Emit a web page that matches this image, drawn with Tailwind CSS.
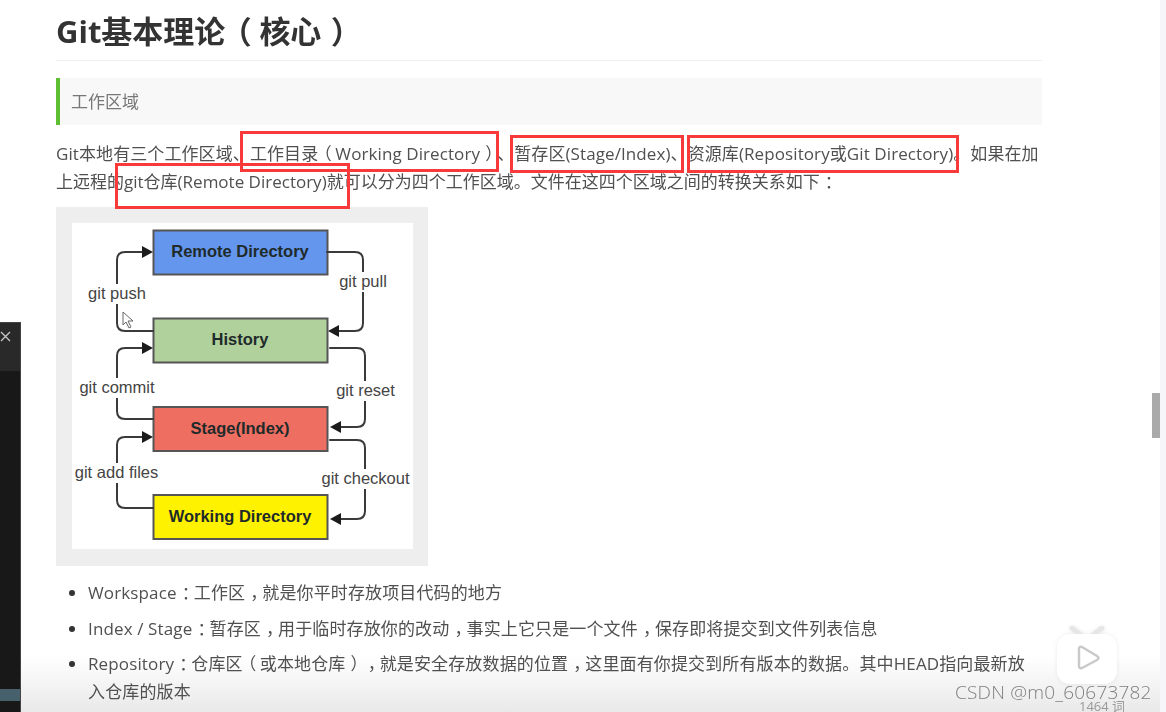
<!DOCTYPE html>
<html lang="zh-CN">
<head>
<meta charset="utf-8">
<title>Git基本理论</title>
<script src="https://cdn.jsdelivr.net/npm/@tailwindcss/browser@4"></script>
</head>
<body class="relative h-[712px] w-[1166px] overflow-hidden bg-white font-['Open_Sans','Noto_Sans_CJK_SC',sans-serif] text-[17px] leading-[28px] text-[#505050] [text-spacing-trim:space-all]">
  <div class="pointer-events-none absolute inset-x-0 bottom-0 h-[56px] bg-gradient-to-b from-white/0 to-[#e9e9e9]"></div>

  <main class="relative ml-[56px] w-[986px] blur-[0.4px]">
    <h1 class="h-[61px] border-b border-[#eeeeee] pt-[10px] text-[31px] leading-[42px] font-bold text-[#333333]">Git基本理论<span class="mr-[3px] inline-block -translate-x-[0.15em]">（</span>核心<span class="inline-block translate-x-[0.3em]">）</span></h1>
    <blockquote class="mt-[17px] flex h-[47px] items-center border-l-[4px] border-[#5fbf32] bg-[#f8f8f8] pt-[1px] pl-[11px] text-[#777777]">工作区域</blockquote>
    <p class="mt-[15px]"><span class="tracking-[0.09px]">Git本地有三个工作区域、工作目录<span class="inline-block -translate-x-[0.2em]">（</span>Working Directory<span class="inline-block translate-x-[0.3em]">）</span>、暂存区(Stage/Index)、资源库(Repository或Git Directory)。如果在加</span>上远程的git仓库(Remote Directory)就可以分为四个工作区域。文件在这四个区域之间的转换关系如下<span class="inline-block translate-x-[0.3em]">：</span></p>
    <div class="mt-[11px] h-[359px] w-[372px] bg-[#eeeeee] p-[16px]">
      <svg width="341" height="326" viewBox="72 223 341 326" fill="none" font-family="'Liberation Sans',sans-serif">
        <rect x="72" y="223" width="341" height="326" fill="#ffffff"/>
        <g stroke="#555555" stroke-width="2">
          <rect x="153.500" y="230.500" width="174" height="44" fill="#6496ee"/>
          <rect x="153.500" y="318.500" width="174" height="44" fill="#b0d09c"/>
          <rect x="153.500" y="407" width="174" height="44" fill="#ee6f62"/>
          <rect x="153.500" y="495" width="174" height="44" fill="#fff200"/>
        </g>
        <g stroke="#3a3a3a" stroke-width="2" stroke-linecap="round">
          <path d="M153 331H125Q117 331 117 323V260Q117 252 125 252H145"/>
          <path d="M327 252H355Q363 252 363 260V323Q363 331 355 331H338"/>
          <path d="M330 348H357Q365 348 365 356V419Q365 427 357 427H341"/>
          <path d="M153 419H125Q117 419 117 411V356Q117 348 125 348H145"/>
          <path d="M153 508H125Q117 508 117 500V445Q117 437 125 437H145"/>
          <path d="M330 440H357Q365 440 365 448V511Q365 519 357 519H341"/>
        </g>
        <g fill="#1c1c1c">
          <path d="M153 252L142 246V258Z"/>
          <path d="M328 331L339 325V337Z"/>
          <path d="M330 427L341 421V433Z"/>
          <path d="M153 348L142 342V354Z"/>
          <path d="M153 437L142 431V443Z"/>
          <path d="M330 519L341 513V525Z"/>
        </g>
        <g fill="#ffffff">
          <rect x="86" y="284" width="62" height="20"/>
          <rect x="337" y="272" width="52" height="20"/>
          <rect x="77" y="378" width="80" height="20"/>
          <rect x="334" y="381" width="63" height="20"/>
          <rect x="73" y="463" width="87" height="20"/>
          <rect x="319" y="469" width="93" height="20"/>
        </g>
        <g fill="#1f2a2a" font-size="16.500" font-weight="700" text-anchor="middle">
          <text x="240" y="257">Remote Directory</text>
          <text x="240" y="345">History</text>
          <text x="240" y="434">Stage(Index)</text>
          <text x="240" y="522">Working Directory</text>
        </g>
        <g fill="#444444" font-size="16.500" text-anchor="middle">
          <text x="117" y="299">git push</text>
          <text x="363" y="287">git pull</text>
          <text x="117" y="393">git commit</text>
          <text x="365.500" y="396">git reset</text>
          <text x="116.500" y="478">git add files</text>
          <text x="365.500" y="484">git checkout</text>
        </g>
        <path d="M123 312V325L126 322L129 328L131 327L128 321L133 321Z" fill="#ffffff" stroke="#666666"/>
      </svg>
    </div>
    <ul class="mt-[13px] list-disc pl-[32px] tracking-[0.13px] marker:text-[#333333]">
      <li class="mb-[8px]">Workspace<span class="inline-block translate-x-[0.3em]">：</span>工作区<span class="inline-block translate-x-[0.3em]">，</span>就是你平时存放项目代码的地方</li>
      <li class="mb-[7px]">Index / Stage<span class="inline-block translate-x-[0.3em]">：</span>暂存区<span class="inline-block translate-x-[0.3em]">，</span>用于临时存放你的改动<span class="inline-block translate-x-[0.3em]">，</span>事实上它只是一个文件<span class="inline-block translate-x-[0.3em]">，</span>保存即将提交到文件列表信息</li>
      <li>Repository<span class="inline-block translate-x-[0.3em]">：</span>仓库区<span class="inline-block -translate-x-[0.2em]">（</span>或本地仓库<span class="inline-block translate-x-[0.3em]">）</span><span class="inline-block translate-x-[0.3em]">，</span>就是安全存放数据的位置<span class="inline-block translate-x-[0.3em]">，</span>这里面有你提交到所有版本的数据。其中HEAD指向最新放<br>入仓库的版本</li>
    </ul>
  </main>

  <div class="absolute top-[322px] left-0 flex h-[390px] w-[21px] flex-col border-t border-r border-[#444444] bg-[#181818]">
    <div class="flex h-[48px] items-start bg-[#292929] pt-[8px]">
      <svg width="11" height="11" viewBox="0 0 11 11" stroke="#c8c8c8" stroke-width="1.300"><path d="M1 1L10 10M10 1L1 10"/></svg>
    </div>
    <div class="mt-[318px] h-[12px] bg-[#46606c]"></div>
  </div>

  <div class="absolute top-0 right-0 h-full w-[6px] bg-[#f5f5fa]"></div>
  <div class="absolute top-[393px] left-[1152px] h-[45px] w-[8px] bg-[#aaaaaa]"></div>

  <svg class="absolute top-[626px] left-[1057px] drop-shadow-[0_0_2px_rgba(0,0,0,0.08)]" width="60" height="58" viewBox="0 0 60 58">
    <path d="M15 2L24 9M45 2L36 9" stroke="#e6e6e6" stroke-width="5" stroke-linecap="round"/>
    <rect x="0" y="8" width="60" height="50" rx="13" fill="#ffffff"/>
    <path d="M22 23Q22 20 25 21L40 30Q43 32 40 34L25 42Q22 43 22 40Z" fill="#ffffff" stroke="#c9c9c9" stroke-width="2.500" stroke-linejoin="round"/>
  </svg>

  <div class="absolute top-[131px] left-[240px] h-[41px] w-[259px] border-[3px] border-[#f93a3a]"></div>
  <div class="absolute top-[135px] left-[510px] h-[38px] w-[174px] border-[3px] border-[#f93a3a]"></div>
  <div class="absolute top-[135px] left-[687px] h-[38px] w-[272px] border-[3px] border-[#f93a3a]"></div>
  <div class="absolute top-[163px] left-[115px] h-[46px] w-[235px] border-[3px] border-[#f93a3a]"></div>

  <div class="absolute top-[680px] left-[955px] text-[19px] leading-[24px] font-light tracking-[0.2px] text-[#7f7f7f]">CSDN @m0_60673782</div>
  <div class="absolute top-[700px] left-[1079px] text-[13px] leading-[12px] text-[#999999]">1464 词</div>
</body>
</html>
